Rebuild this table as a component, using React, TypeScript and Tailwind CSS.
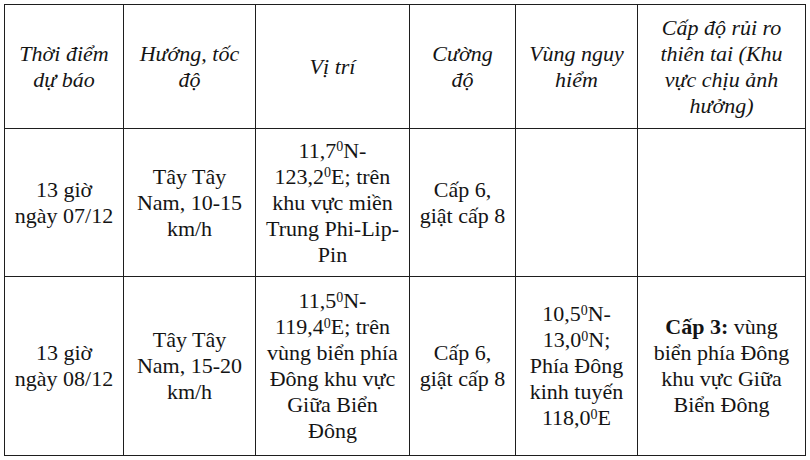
import React from "react";

// superscript degree-like zero used in coordinates
function Deg() {
  return <sup className="text-[14px] top-[-0.45em]">0</sup>;
}

type Cell = React.ReactNode;

const header: Cell[] = [
  <>Thời điểm<br />dự báo</>,
  <>Hướng, tốc<br />độ</>,
  <>Vị trí</>,
  <>Cường<br />độ</>,
  <>Vùng nguy<br />hiểm</>,
  <>Cấp độ rủi ro<br />thiên tai (Khu<br />vực chịu ảnh<br />hưởng)</>,
];

const rows: { height: string; cells: Cell[] }[] = [
  {
    height: "h-[148px]",
    cells: [
      <>13 giờ<br />ngày 07/12</>,
      <>Tây Tây<br />Nam, 10-15<br />km/h</>,
      <>
        11,7<Deg />N-<br />123,2<Deg />E; trên<br />khu vực miền<br />Trung Phi-Lip-<br />Pin
      </>,
      <>Cấp 6,<br />giật cấp 8</>,
      null,
      null,
    ],
  },
  {
    height: "h-[179px]",
    cells: [
      <>13 giờ<br />ngày 08/12</>,
      <>Tây Tây<br />Nam, 15-20<br />km/h</>,
      <>
        11,5<Deg />N-<br />119,4<Deg />E; trên<br />vùng biển phía<br />Đông khu vực<br />Giữa Biển<br />Đông
      </>,
      <>Cấp 6,<br />giật cấp 8</>,
      <>
        10,5<Deg />N-<br />13,0<Deg />N;<br />Phía Đông<br />kinh tuyến<br />118,0<Deg />E
      </>,
      <>
        <b className="font-bold">Cấp 3:</b> vùng<br />biển phía Đông<br />khu vực Giữa<br />Biển Đông
      </>,
    ],
  },
];

const widths = ["w-[119px]", "w-[132px]", "w-[154px]", "w-[106px]", "w-[122px]", "w-[168px]"];

const cellClass =
  "border-[1.5px] border-[#1e1e1e] text-center align-middle whitespace-nowrap px-1 text-[22px] leading-[26px] text-[#141414] font-['Liberation_Serif']";

export default function App() {
  return (
    <div className="w-[810px] h-[460px] bg-white p-1 font-serif">
      <table className="border-collapse table-fixed w-[801px]">
        <colgroup>
          {widths.map((w, i) => (
            <col key={i} className={w} />
          ))}
        </colgroup>
        <thead>
          <tr className="h-[124px]">
            {header.map((c, i) => (
              <th key={i} className={`${cellClass} italic font-normal`}>
                {c}
              </th>
            ))}
          </tr>
        </thead>
        <tbody>
          {rows.map((r, ri) => (
            <tr key={ri} className={r.height}>
              {r.cells.map((c, ci) => (
                <td key={ci} className={cellClass}>
                  {c}
                </td>
              ))}
            </tr>
          ))}
        </tbody>
      </table>
    </div>
  );
}
